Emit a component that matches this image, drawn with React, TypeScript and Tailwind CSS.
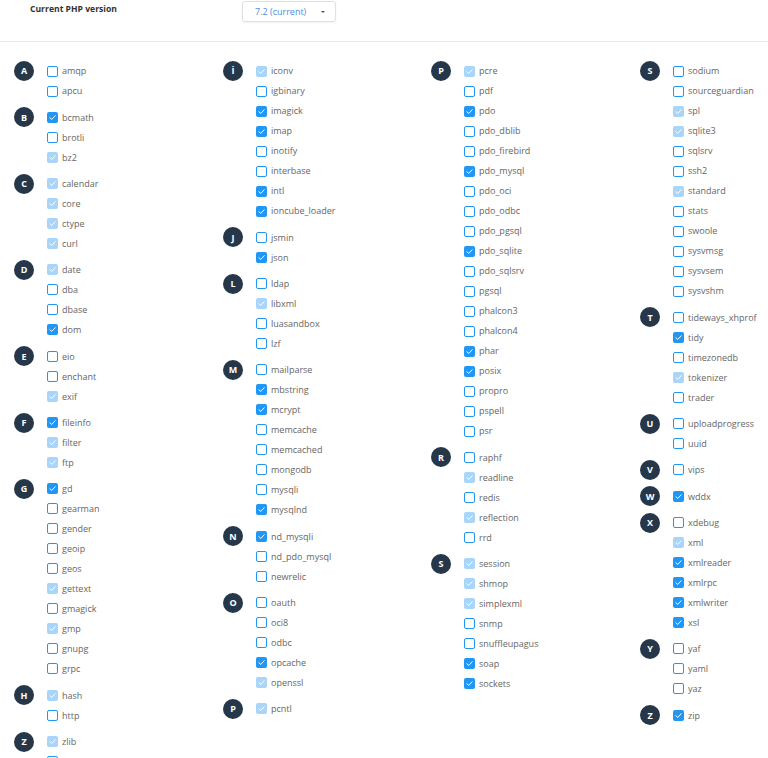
import React from 'react';

type Item = [string, number]; // 0 off, 1 on, 2 on + locked
type Group = { letter: string; items: Item[] };

const columns: Group[][] = [
  [
    { letter: 'A', items: [['amqp', 0], ['apcu', 0]] },
    { letter: 'B', items: [['bcmath', 1], ['brotli', 0], ['bz2', 2]] },
    { letter: 'C', items: [['calendar', 2], ['core', 2], ['ctype', 2], ['curl', 2]] },
    { letter: 'D', items: [['date', 2], ['dba', 0], ['dbase', 0], ['dom', 1]] },
    { letter: 'E', items: [['eio', 0], ['enchant', 0], ['exif', 2]] },
    { letter: 'F', items: [['fileinfo', 1], ['filter', 2], ['ftp', 2]] },
    {
      letter: 'G',
      items: [
        ['gd', 1], ['gearman', 0], ['gender', 0], ['geoip', 0], ['geos', 0],
        ['gettext', 2], ['gmagick', 0], ['gmp', 2], ['gnupg', 0], ['grpc', 0],
      ],
    },
    { letter: 'H', items: [['hash', 2], ['http', 0]] },
    { letter: 'Z', items: [['zlib', 2], ['', 0]] },
  ],
  [
    {
      letter: 'İ',
      items: [
        ['iconv', 2], ['igbinary', 0], ['imagick', 1], ['imap', 1],
        ['inotify', 0], ['interbase', 0], ['intl', 1], ['ioncube_loader', 1],
      ],
    },
    { letter: 'J', items: [['jsmin', 0], ['json', 1]] },
    { letter: 'L', items: [['ldap', 0], ['libxml', 2], ['luasandbox', 0], ['lzf', 0]] },
    {
      letter: 'M',
      items: [
        ['mailparse', 0], ['mbstring', 1], ['mcrypt', 1], ['memcache', 0],
        ['memcached', 0], ['mongodb', 0], ['mysqli', 0], ['mysqlnd', 1],
      ],
    },
    { letter: 'N', items: [['nd_mysqli', 1], ['nd_pdo_mysql', 0], ['newrelic', 0]] },
    { letter: 'O', items: [['oauth', 0], ['oci8', 0], ['odbc', 0], ['opcache', 1], ['openssl', 2]] },
    { letter: 'P', items: [['pcntl', 2]] },
  ],
  [
    {
      letter: 'P',
      items: [
        ['pcre', 2], ['pdf', 0], ['pdo', 1], ['pdo_dblib', 0], ['pdo_firebird', 0],
        ['pdo_mysql', 1], ['pdo_oci', 0], ['pdo_odbc', 0], ['pdo_pgsql', 0], ['pdo_sqlite', 1],
        ['pdo_sqlsrv', 0], ['pgsql', 0], ['phalcon3', 0], ['phalcon4', 0], ['phar', 1],
        ['posix', 1], ['propro', 0], ['pspell', 0], ['psr', 0],
      ],
    },
    { letter: 'R', items: [['raphf', 0], ['readline', 2], ['redis', 0], ['reflection', 2], ['rrd', 0]] },
    {
      letter: 'S',
      items: [
        ['session', 2], ['shmop', 2], ['simplexml', 2], ['snmp', 0],
        ['snuffleupagus', 0], ['soap', 1], ['sockets', 1],
      ],
    },
  ],
  [
    {
      letter: 'S',
      items: [
        ['sodium', 0], ['sourceguardian', 0], ['spl', 2], ['sqlite3', 2], ['sqlsrv', 0], ['ssh2', 0],
        ['standard', 2], ['stats', 0], ['swoole', 0], ['sysvmsg', 0], ['sysvsem', 0], ['sysvshm', 0],
      ],
    },
    { letter: 'T', items: [['tideways_xhprof', 0], ['tidy', 1], ['timezonedb', 0], ['tokenizer', 2], ['trader', 0]] },
    { letter: 'U', items: [['uploadprogress', 0], ['uuid', 0]] },
    { letter: 'V', items: [['vips', 0]] },
    { letter: 'W', items: [['wddx', 1]] },
    {
      letter: 'X',
      items: [['xdebug', 0], ['xml', 2], ['xmlreader', 1], ['xmlrpc', 1], ['xmlwriter', 1], ['xsl', 1]],
    },
    { letter: 'Y', items: [['yaf', 0], ['yaml', 0], ['yaz', 0]] },
    { letter: 'Z', items: [['zip', 1]] },
  ],
];

const Check = () => (
  <svg viewBox="0 0 12 12" className="w-[9px] h-[9px]" fill="none">
    <path d="M2.5 6.3 L5 8.6 L9.6 3.6" stroke="white" strokeWidth="1.3" strokeLinecap="round" strokeLinejoin="round" />
  </svg>
);

const Box = ({ state }: { state: number }) => {
  if (state === 0)
    return <span className="w-[11px] h-[11px] rounded-[2px] border border-[#2196f3] bg-white shrink-0" />;
  return (
    <span
      className={
        'w-[11px] h-[11px] rounded-[2px] flex items-center justify-center shrink-0 ' +
        (state === 1 ? 'bg-[#2196f3]' : 'bg-[#a9d5fa]')
      }
    >
      <Check />
    </span>
  );
};

const LetterGroup = ({ group }: { group: Group }) => (
  <div className="flex">
    <div className="w-[20px] h-[20px] rounded-full bg-[#26374a] text-white text-[9px] font-bold flex items-center justify-center shrink-0">
      {group.letter}
    </div>
    <div className="ml-[13px] flex flex-col">
      {group.items.map(([name, state], k) => (
        <label key={name + k} className="h-[20px] flex items-center gap-[4px] cursor-pointer">
          <Box state={state} />
          {name && <span className="text-[9px] text-[#666] whitespace-nowrap">{name}</span>}
        </label>
      ))}
    </div>
  </div>
);

export default function App() {
  return (
    <div className="w-[768px] h-[758px] overflow-hidden bg-white font-['Open_Sans',sans-serif]">
      <div className="h-[42px] border-b border-[#e8e8e8] flex items-start">
        <div className="pl-[30px] w-[242px] pt-[3px] text-[8.6px] font-bold text-[#333]">Current PHP version</div>
        <div className="mt-[1px] w-[94px] h-[21px] border border-[#dcdfe6] rounded-[3px] shadow-[0_1px_2px_rgba(0,0,0,0.06)] flex items-center justify-between pl-[12px] pr-[10px]">
          <span className="text-[9px] text-[#4d8fe0]">7.2 (current)</span>
          <span className="w-0 h-0 border-l-[2px] border-r-[2px] border-t-[2.5px] border-l-transparent border-r-transparent border-t-[#555]" />
        </div>
      </div>
      <div className="grid grid-cols-[209px_208px_209px_1fr] pl-[14px] pt-[19px]">
        {columns.map((col, i) => (
          <div key={i} className="flex flex-col gap-y-[6.33px]">
            {col.map((g, j) => (
              <LetterGroup key={j} group={g} />
            ))}
          </div>
        ))}
      </div>
    </div>
  );
}
